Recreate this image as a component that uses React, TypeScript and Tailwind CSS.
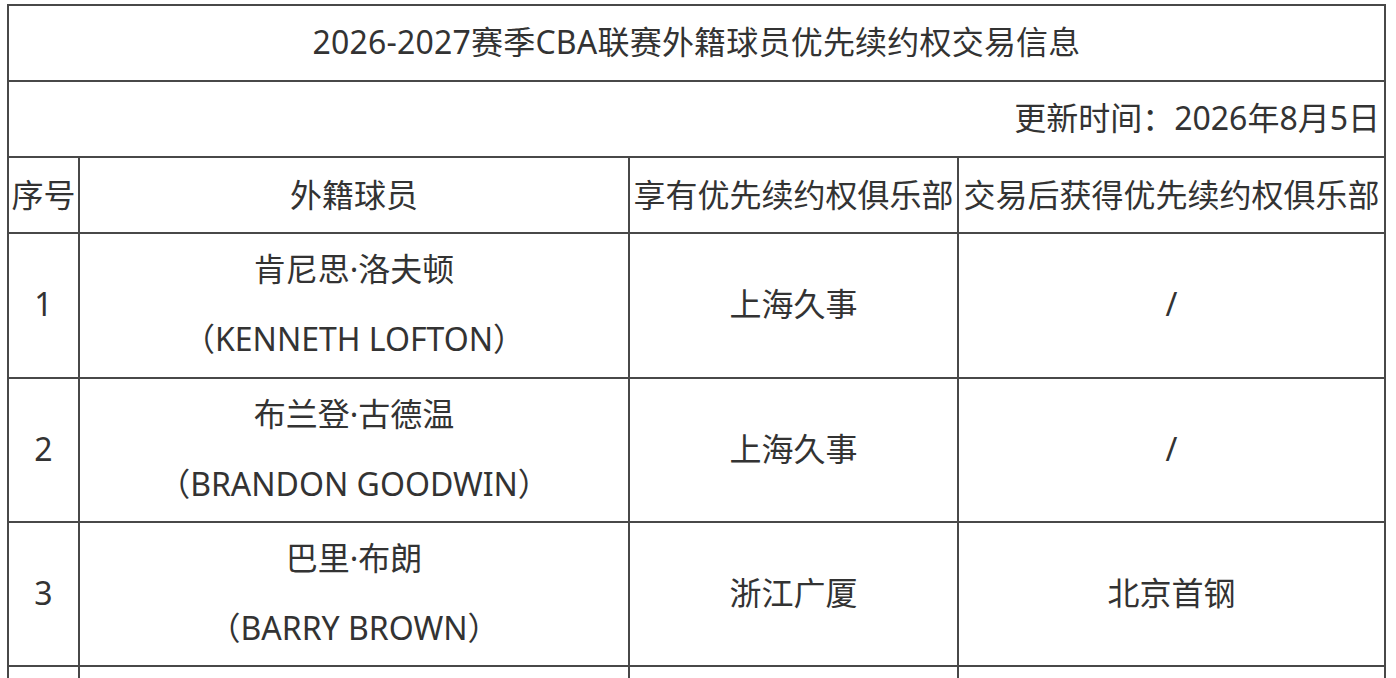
const rows = [
  { no: "1", cn: "肯尼思·洛夫顿", en: "（KENNETH LOFTON）", club: "上海久事", after: "/", h: "h-[145px]" },
  { no: "2", cn: "布兰登·古德温", en: "（BRANDON GOODWIN）", club: "上海久事", after: "/", h: "h-[144px]" },
  { no: "3", cn: "巴里·布朗", en: "（BARRY BROWN）", club: "浙江广厦", after: "北京首钢", h: "h-[144px]" },
];

const cell = "border-2 border-[#484848] text-center align-middle p-0";

export default function App() {
  return (
    <div
      className="w-[1396px] h-[678px] overflow-hidden bg-white text-[#333] pl-[7px] pt-[4px]"
      style={{ fontFamily: '"Noto Sans", "Noto Sans CJK SC", sans-serif' }}
    >
      <table className="table-fixed border-collapse w-[1377px] text-[32px] leading-none">
        <colgroup>
          <col className="w-[71px]" />
          <col className="w-[550px]" />
          <col className="w-[329px]" />
          <col className="w-[427px]" />
        </colgroup>
        <tbody>
          <tr className="h-[76px]">
            <td colSpan={4} className={cell}>
              <div className="-mt-[2px] tracking-[0.2px]">2026-2027赛季CBA联赛外籍球员优先续约权交易信息</div>
            </td>
          </tr>
          <tr className="h-[76px]">
            <td colSpan={4} className={`${cell} !text-right pr-[4px]`}>
              <div className="-mt-[2px]">更新时间：2026年8月5日</div>
            </td>
          </tr>
          <tr className="h-[76px]">
            <td className={cell}>序号</td>
            <td className={cell}>外籍球员</td>
            <td className={`${cell} whitespace-nowrap`}>享有优先续约权俱乐部</td>
            <td className={`${cell} whitespace-nowrap`}>交易后获得优先续约权俱乐部</td>
          </tr>
          {rows.map((r) => (
            <tr key={r.no} className={r.h}>
              <td className={cell}>
                <div className="-mt-[3px]">{r.no}</div>
              </td>
              <td className={cell}>
                <div className="-mt-[3px]">
                  <div className="leading-[70px]">{r.cn}</div>
                  <div className="leading-[70px]">{r.en}</div>
                </div>
              </td>
              <td className={cell}>
                <div className="-mt-[3px]">{r.club}</div>
              </td>
              <td className={cell}>
                <div className="-mt-[3px]">{r.after}</div>
              </td>
            </tr>
          ))}
          <tr className="h-[145px]">
            <td className={cell}></td>
            <td className={cell}></td>
            <td className={cell}></td>
            <td className={cell}></td>
          </tr>
        </tbody>
      </table>
    </div>
  );
}
